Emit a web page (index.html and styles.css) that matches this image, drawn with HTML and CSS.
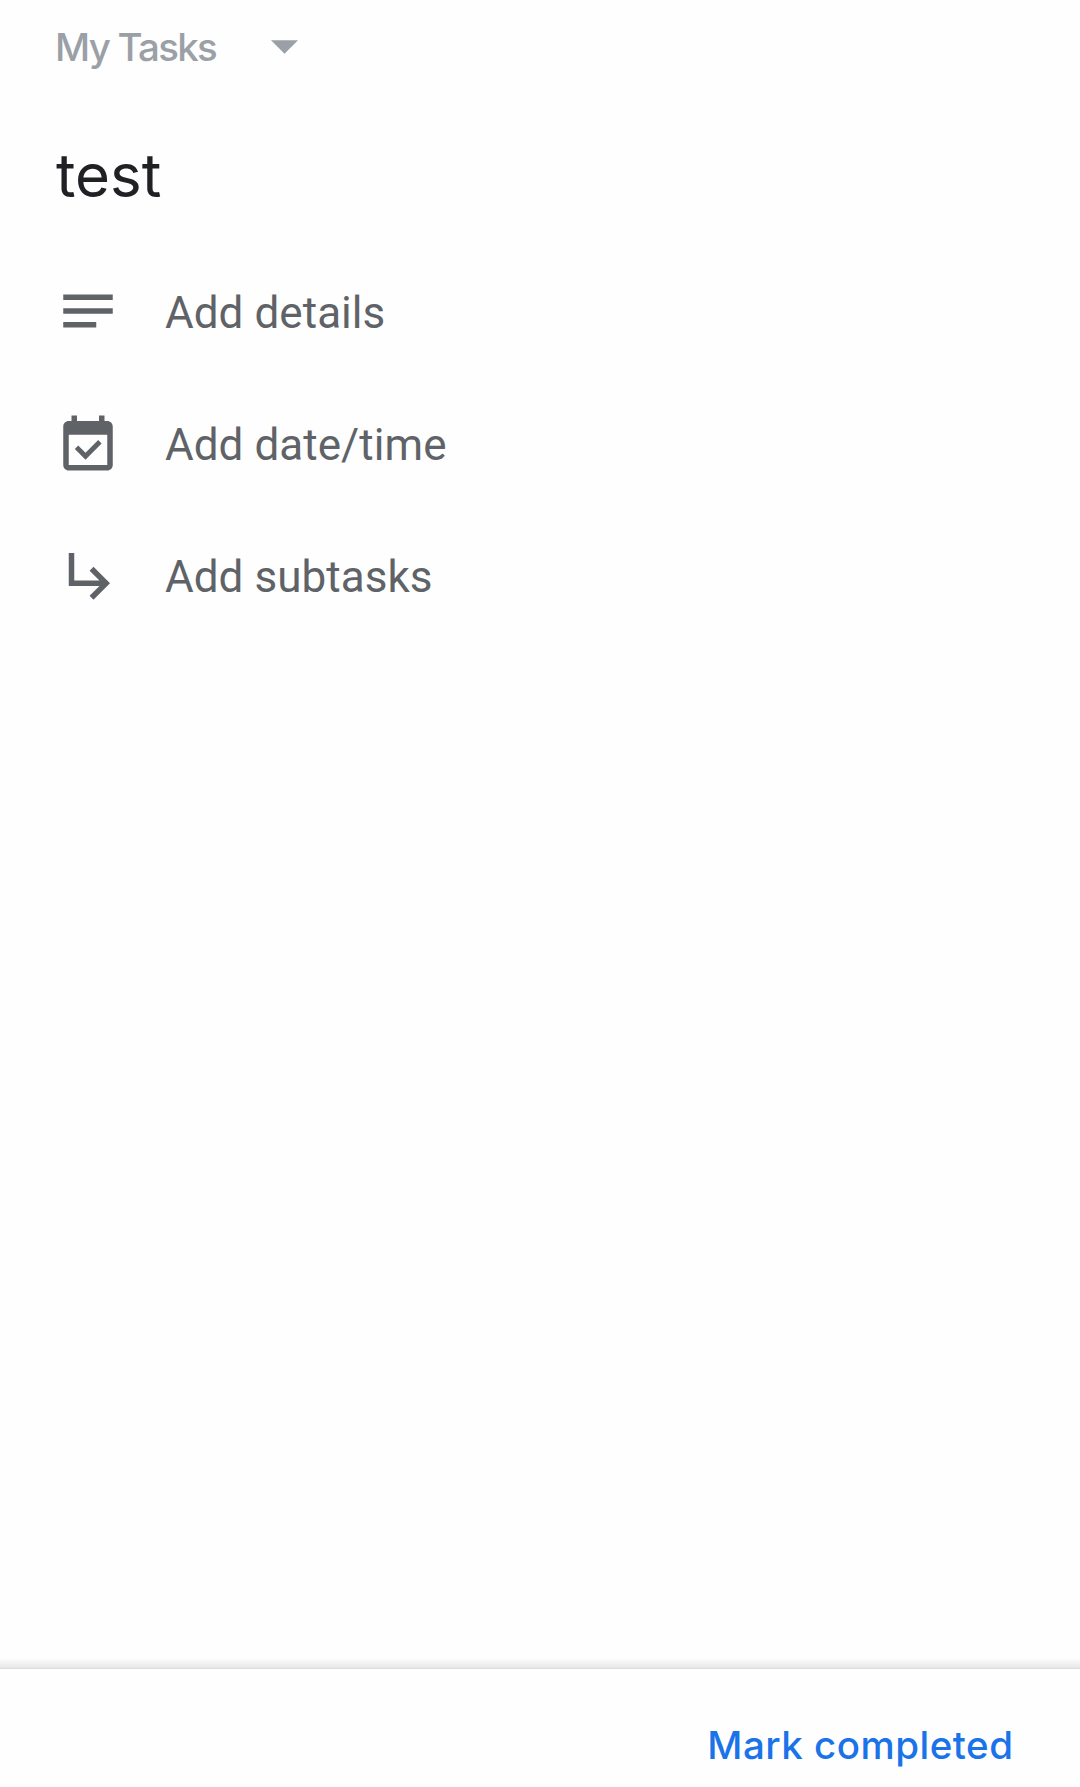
FILE: index.html
```html
<!DOCTYPE html>
<html lang="en">
<head>
<meta charset="utf-8">
<title>Task details</title>
<link rel="stylesheet" href="styles.css">
</head>
<body>
<div class="screen">
  <main class="task">
    <div class="list-picker">
      <span class="list-name">My Tasks</span>
      <svg class="caret" viewBox="0 0 10 5"><path d="M0 0h10L5 5z"/></svg>
    </div>
    <h1 class="title">test</h1>
    <div class="row">
      <svg class="icon" viewBox="0 0 24 24"><path d="M3 6h18v2H3zM3 11h18v2H3zM3 16h12v2H3z"/></svg>
      <span class="label">Add details</span>
    </div>
    <div class="row">
      <svg class="icon" viewBox="0 0 24 24"><path d="M19 4h-1V2h-2v2H8V2H6v2H5c-1.1 0-2 .9-2 2v14c0 1.1.9 2 2 2h14c1.1 0 2-.9 2-2V6c0-1.100-.9-2-2-2zm0 16H5V9h14z"/><path d="M7.200 14.150L11.100 18.050 16.950 12.200 15.700 10.950 11.100 15.550 8.450 12.900z"/></svg>
      <span class="label">Add date/time</span>
    </div>
    <div class="row">
      <svg class="icon" viewBox="0 0 24 24"><path d="M20 15l-6 6-1.420-1.420L16.170 16H5V4h2v10h9.170l-3.590-3.580L14 9z"/></svg>
      <span class="label">Add subtasks</span>
    </div>
  </main>
  <div class="shade"></div>
  <footer class="footer"><button class="complete" type="button">Mark completed</button></footer>
</div>
</body>
</html>
```
FILE: styles.css
```css
* { box-sizing: border-box; }
body { margin: 0; background: #fefefe; }
.screen {
  display: flex;
  flex-direction: column;
  height: 1787px;
  overflow: hidden;
  font-family: Roboto, sans-serif;
}
.task { flex: 1; padding-left: 55px; }
.list-picker {
  display: flex;
  align-items: center;
  height: 94px;
  color: #9aa0a6;
}
.list-name {
  width: 216px;
  font: 500 38.5px/93px Inter, sans-serif;
  letter-spacing: -1.75px;
  white-space: nowrap;
}
.caret { width: 27px; height: 14px; fill: currentColor; }
.title {
  margin: 0;
  height: 150.5px;
  padding: 6px 0 0 1px;
  color: #202124;
  font: 400 60px/150px Inter, sans-serif;
}
.row {
  display: flex;
  align-items: center;
  gap: 44px;
  height: 132px;
  color: #5f6368;
}
.icon { width: 66px; height: 66px; fill: currentColor; }
.label {
  padding-top: 5px;
  font-size: 44px;
  line-height: 60px;
  letter-spacing: 0.05px;
}
.shade {
  height: 11px;
  background: linear-gradient(#fefefe, #e8e8e8 85%, #d9d9d9);
}
.footer {
  display: flex;
  justify-content: flex-end;
  height: 118px;
  padding: 17px 66.5px 0 0;
}
.complete {
  height: 118px;
  padding: 0;
  border: 0;
  background: none;
  color: #1a73e8;
  font: 500 38.5px/118px Inter, sans-serif;
  letter-spacing: 0.5px;
  white-space: nowrap;
}
```
